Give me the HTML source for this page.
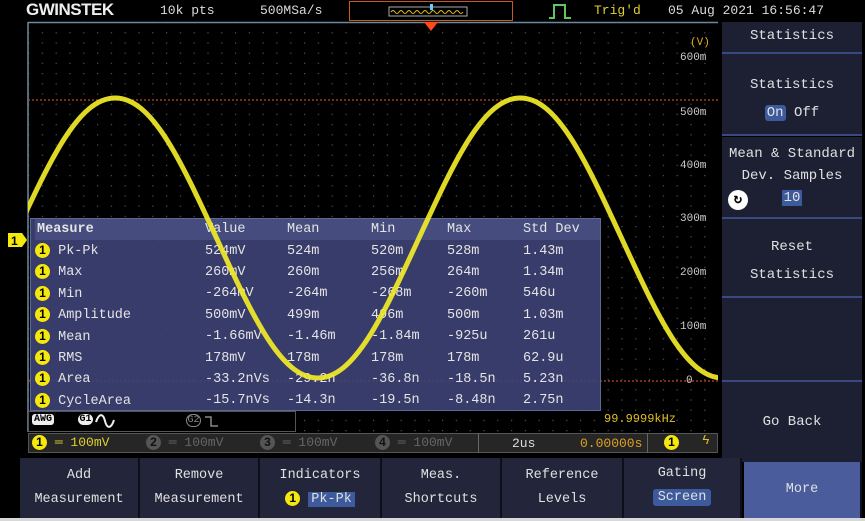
<!DOCTYPE html>
<html><head><meta charset="utf-8"><style>
*{margin:0;padding:0;box-sizing:border-box}
body{width:865px;height:521px;background:#000;overflow:hidden;position:relative;font-family:"Liberation Mono",monospace;color:#dcdcdc;font-size:13px}
.a{position:absolute;white-space:nowrap}
.btn{position:absolute;top:458px;height:60px;background:#23253a;border-right:2px solid #0d0e18;text-align:center;line-height:24px;padding-top:6px;font-size:13.5px;color:#e0e0e0}
.rp{position:absolute;left:722px;width:140px;background:#1d2033;text-align:center;color:#e0e0e0;font-size:14px}
.c1{display:inline-block;width:15px;height:15px;border-radius:50%;background:#f4e80e;color:#000;font-weight:bold;font-size:12px;line-height:15px;text-align:center;font-family:"Liberation Sans",sans-serif}
table{border-collapse:collapse}
td{height:21.4px;padding:0;font-size:13.5px;color:#e4e4e4}
</style></head><body>
<div class="a" style="left:26px;top:0;font:bold 17px 'Liberation Sans',sans-serif;color:#eee;letter-spacing:-0.5px">GWINSTEK</div>
<div class="a" style="left:160px;top:3px">10k pts</div>
<div class="a" style="left:260px;top:3px">500MSa/s</div>
<div class="a" style="left:349px;top:1px;width:164px;height:20px;border:1.5px solid #c85a20"></div>
<svg class="a" style="left:388px;top:4px" width="80" height="14"><rect x="1" y="3" width="78" height="9" fill="none" stroke="#aaa"/><path d="M3 8 q2 -3 4 0 t4 0 t4 0 t4 0 t4 0 t4 0 t4 0 t4 0 t4 0 t4 0 t4 0 t4 0 t4 0 t4 0 t4 0 t4 0 t4 0 t4 0" stroke="#e0c020" fill="none"/><rect x="42" y="0" width="3" height="6" fill="#6cf"/></svg>
<svg class="a" style="left:548px;top:3px" width="24" height="16"><path d="M1 15 H6 V2 H17 V15 H23" stroke="#5ec85e" stroke-width="2" fill="none"/></svg>
<div class="a" style="left:594px;top:3px;color:#e0d030">Trig'd</div>
<div class="a" style="left:668px;top:3px">05 Aug 2021 16:56:47</div>

<svg class="a" style="left:0;top:0" width="720" height="460">
<defs><pattern id="g" x="28" y="22" width="13.8" height="10.2" patternUnits="userSpaceOnUse"><rect x="0" y="0" width="1.2" height="1.2" fill="#555"/></pattern></defs>
<rect x="28" y="22" width="690" height="410" fill="url(#g)"/>
<path d="M28 22.5H718" stroke="#6a8aa0" stroke-width="1.5"/>
<path d="M28 22V432" stroke="#6a8aa0" stroke-width="1.5"/>
<path d="M28 100H718M28 381H718" stroke="#c04a20" stroke-width="1.2" stroke-dasharray="2 2"/>
<polygon points="424,22 438,22 431,31" fill="#ff4a20"/>
<rect x="8" y="233" width="14" height="14" fill="#f4e80e"/><polygon points="22,233 27,240 22,247" fill="#f4e80e"/>
<text x="11" y="245" font-family="Liberation Sans" font-weight="bold" font-size="12">1</text>
</svg>
<div class="a" style="left:690px;top:37px;color:#e0b020;font-size:11px">(V)</div>
<div class="a" style="left:680px;top:52px;font-size:11px;color:#ccc">600m</div>
<div class="a" style="left:680px;top:107px;font-size:11px;color:#ccc">500m</div>
<div class="a" style="left:680px;top:160px;font-size:11px;color:#ccc">400m</div>
<div class="a" style="left:680px;top:213px;font-size:11px;color:#ccc">300m</div>
<div class="a" style="left:680px;top:267px;font-size:11px;color:#ccc">200m</div>
<div class="a" style="left:680px;top:321px;font-size:11px;color:#ccc">100m</div>
<div class="a" style="left:686px;top:375px;font-size:11px;color:#ccc">0</div>

<div class="a" style="left:30px;top:218px;width:571px;height:193px;background:rgba(62,66,118,0.9);border:1px solid #5a6a90">
<table style="margin-left:4px;width:565px">
<tr style="background:rgba(80,88,140,0.6)"><td style="width:170px;font-weight:bold;padding-left:2px">Measure</td><td style="width:82px">Value</td><td style="width:84px">Mean</td><td style="width:76px">Min</td><td style="width:76px">Max</td><td>Std Dev</td></tr>
<tr><td><span class="c1">1</span> Pk-Pk</td><td>524mV</td><td>524m</td><td>520m</td><td>528m</td><td>1.43m</td></tr>
<tr><td><span class="c1">1</span> Max</td><td>260mV</td><td>260m</td><td>256m</td><td>264m</td><td>1.34m</td></tr>
<tr><td><span class="c1">1</span> Min</td><td>-264mV</td><td>-264m</td><td>-268m</td><td>-260m</td><td>546u</td></tr>
<tr><td><span class="c1">1</span> Amplitude</td><td>500mV</td><td>499m</td><td>496m</td><td>500m</td><td>1.03m</td></tr>
<tr><td><span class="c1">1</span> Mean</td><td>-1.66mV</td><td>-1.46m</td><td>-1.84m</td><td>-925u</td><td>261u</td></tr>
<tr><td><span class="c1">1</span> RMS</td><td>178mV</td><td>178m</td><td>178m</td><td>178m</td><td>62.9u</td></tr>
<tr><td><span class="c1">1</span> Area</td><td>-33.2nVs</td><td>-29.2n</td><td>-36.8n</td><td>-18.5n</td><td>5.23n</td></tr>
<tr><td><span class="c1">1</span> CycleArea</td><td>-15.7nVs</td><td>-14.3n</td><td>-19.5n</td><td>-8.48n</td><td>2.75n</td></tr>
</table></div>

<svg class="a" style="left:0;top:0" width="720" height="460">
<clipPath id="cl"><rect x="28" y="22" width="690" height="388"/></clipPath>
<path clip-path="url(#cl)" d="M14 238 C50.9 158 78.8 98 115.25 98 C151.7 98 179.6 158 216.5 238 C253.4 318 281.3 378 317.75 378 C354.2 378 382.1 318 419 238 C455.9 158 483.8 98 520.25 98 C556.7 98 584.6 158 621.5 238 C658.4 318 686.3 378 722.75 378" stroke="#f2ec28" stroke-width="5" fill="none" opacity="0.92"/>
</svg>

<div class="a" style="left:28px;top:411px;width:268px;height:21px;border:1px solid #555;background:#000"></div>
<div class="a" style="left:32px;top:414px;background:#eee;color:#000;font-size:10px;font-weight:bold;padding:0 2px;border-radius:3px">AWG</div>
<div class="a" style="left:78px;top:414px;background:#eee;color:#000;font-size:10px;font-weight:bold;width:15px;border-radius:7px;text-align:center">G1</div>
<svg class="a" style="left:95px;top:413px" width="20" height="16"><path d="M1 9 C4 0 8 0 10 8 C12 16 16 16 19 7" stroke="#eee" stroke-width="2" fill="none"/></svg>
<div class="a" style="left:186px;top:414px;border:1px solid #888;color:#888;font-size:10px;width:15px;border-radius:7px;text-align:center">G2</div>
<svg class="a" style="left:204px;top:414px" width="16" height="14"><path d="M1 3H7V12H14" stroke="#888" stroke-width="1.5" fill="none"/></svg>
<div class="a" style="left:604px;top:412px;color:#e0c020;font-size:12px">99.9999kHz</div>

<div class="a" style="left:28px;top:433px;width:690px;height:20px;background:#262626;border:1px solid #555"></div>
<div class="a" style="left:32px;top:435px"><span class="c1">1</span> <span style="color:#e0d030">═ 100mV</span></div>
<div class="a" style="left:146px;top:435px;color:#666"><span class="c1" style="background:#555;color:#111">2</span> ═ 100mV</div>
<div class="a" style="left:260px;top:435px;color:#666"><span class="c1" style="background:#555;color:#111">3</span> ═ 100mV</div>
<div class="a" style="left:375px;top:435px;color:#666"><span class="c1" style="background:#555;color:#111">4</span> ═ 100mV</div>
<div class="a" style="left:478px;top:433px;width:170px;height:20px;border-left:1px solid #666;border-right:1px solid #666"></div>
<div class="a" style="left:512px;top:436px">2us</div>
<div class="a" style="left:580px;top:436px;color:#e0a020">0.00000s</div>
<div class="a" style="left:664px;top:435px"><span class="c1">1</span></div>
<div class="a" style="left:702px;top:433px;color:#e0c020">ϟ</div>

<div class="rp" style="top:22px;height:30px;line-height:28px">Statistics</div>
<div class="rp" style="top:54px;height:80px;padding-top:17px;line-height:28px">Statistics<br><span style="background:#3c5a9c;padding:0 2px;border-radius:3px">On</span> Off</div>
<div class="rp" style="top:137px;height:80px;padding-top:6px;line-height:22px">Mean &amp; Standard<br>Dev. Samples<br><span style="background:#3c5a9c;padding:0 2px">10</span></div>
<div class="a" style="left:728px;top:190px;width:20px;height:20px;border-radius:50%;background:#fff;color:#000;text-align:center;font-size:14px;line-height:20px;font-weight:bold">↻</div>
<div class="rp" style="top:219px;height:77px;padding-top:14px;line-height:28px">Reset<br>Statistics</div>
<div class="rp" style="top:298px;height:82px"></div>
<div class="rp" style="top:382px;height:80px;line-height:80px">Go Back</div>
<div class="a" style="left:722px;top:52px;width:140px;height:2px;background:#3a4a80"></div>
<div class="a" style="left:722px;top:134px;width:140px;height:2px;background:#3a4a80"></div>
<div class="a" style="left:722px;top:217px;width:140px;height:2px;background:#3a4a80"></div>
<div class="a" style="left:722px;top:296px;width:140px;height:2px;background:#3a4a80"></div>
<div class="a" style="left:722px;top:380px;width:140px;height:2px;background:#3a4a80"></div>

<div class="btn" style="left:20px;width:120px">Add<br>Measurement</div>
<div class="btn" style="left:140px;width:120px">Remove<br>Measurement</div>
<div class="btn" style="left:260px;width:122px">Indicators<br><span class="c1">1</span> <span style="background:#3c5a9c;padding:0 3px">Pk-Pk</span></div>
<div class="btn" style="left:382px;width:120px">Meas.<br>Shortcuts</div>
<div class="btn" style="left:502px;width:122px">Reference<br>Levels</div>
<div class="btn" style="left:624px;width:118px;padding-top:4px">Gating<br><span style="background:#3c5a9c;padding:1px 5px;border-radius:3px">Screen</span></div>
<div class="btn" style="left:744px;width:118px;top:462px;height:56px;background:#4a5c9c;line-height:56px;padding-top:0">More</div>
<div class="a" style="left:0;top:518px;width:865px;height:3px;background:#d8d8d8"></div>
</body></html>
